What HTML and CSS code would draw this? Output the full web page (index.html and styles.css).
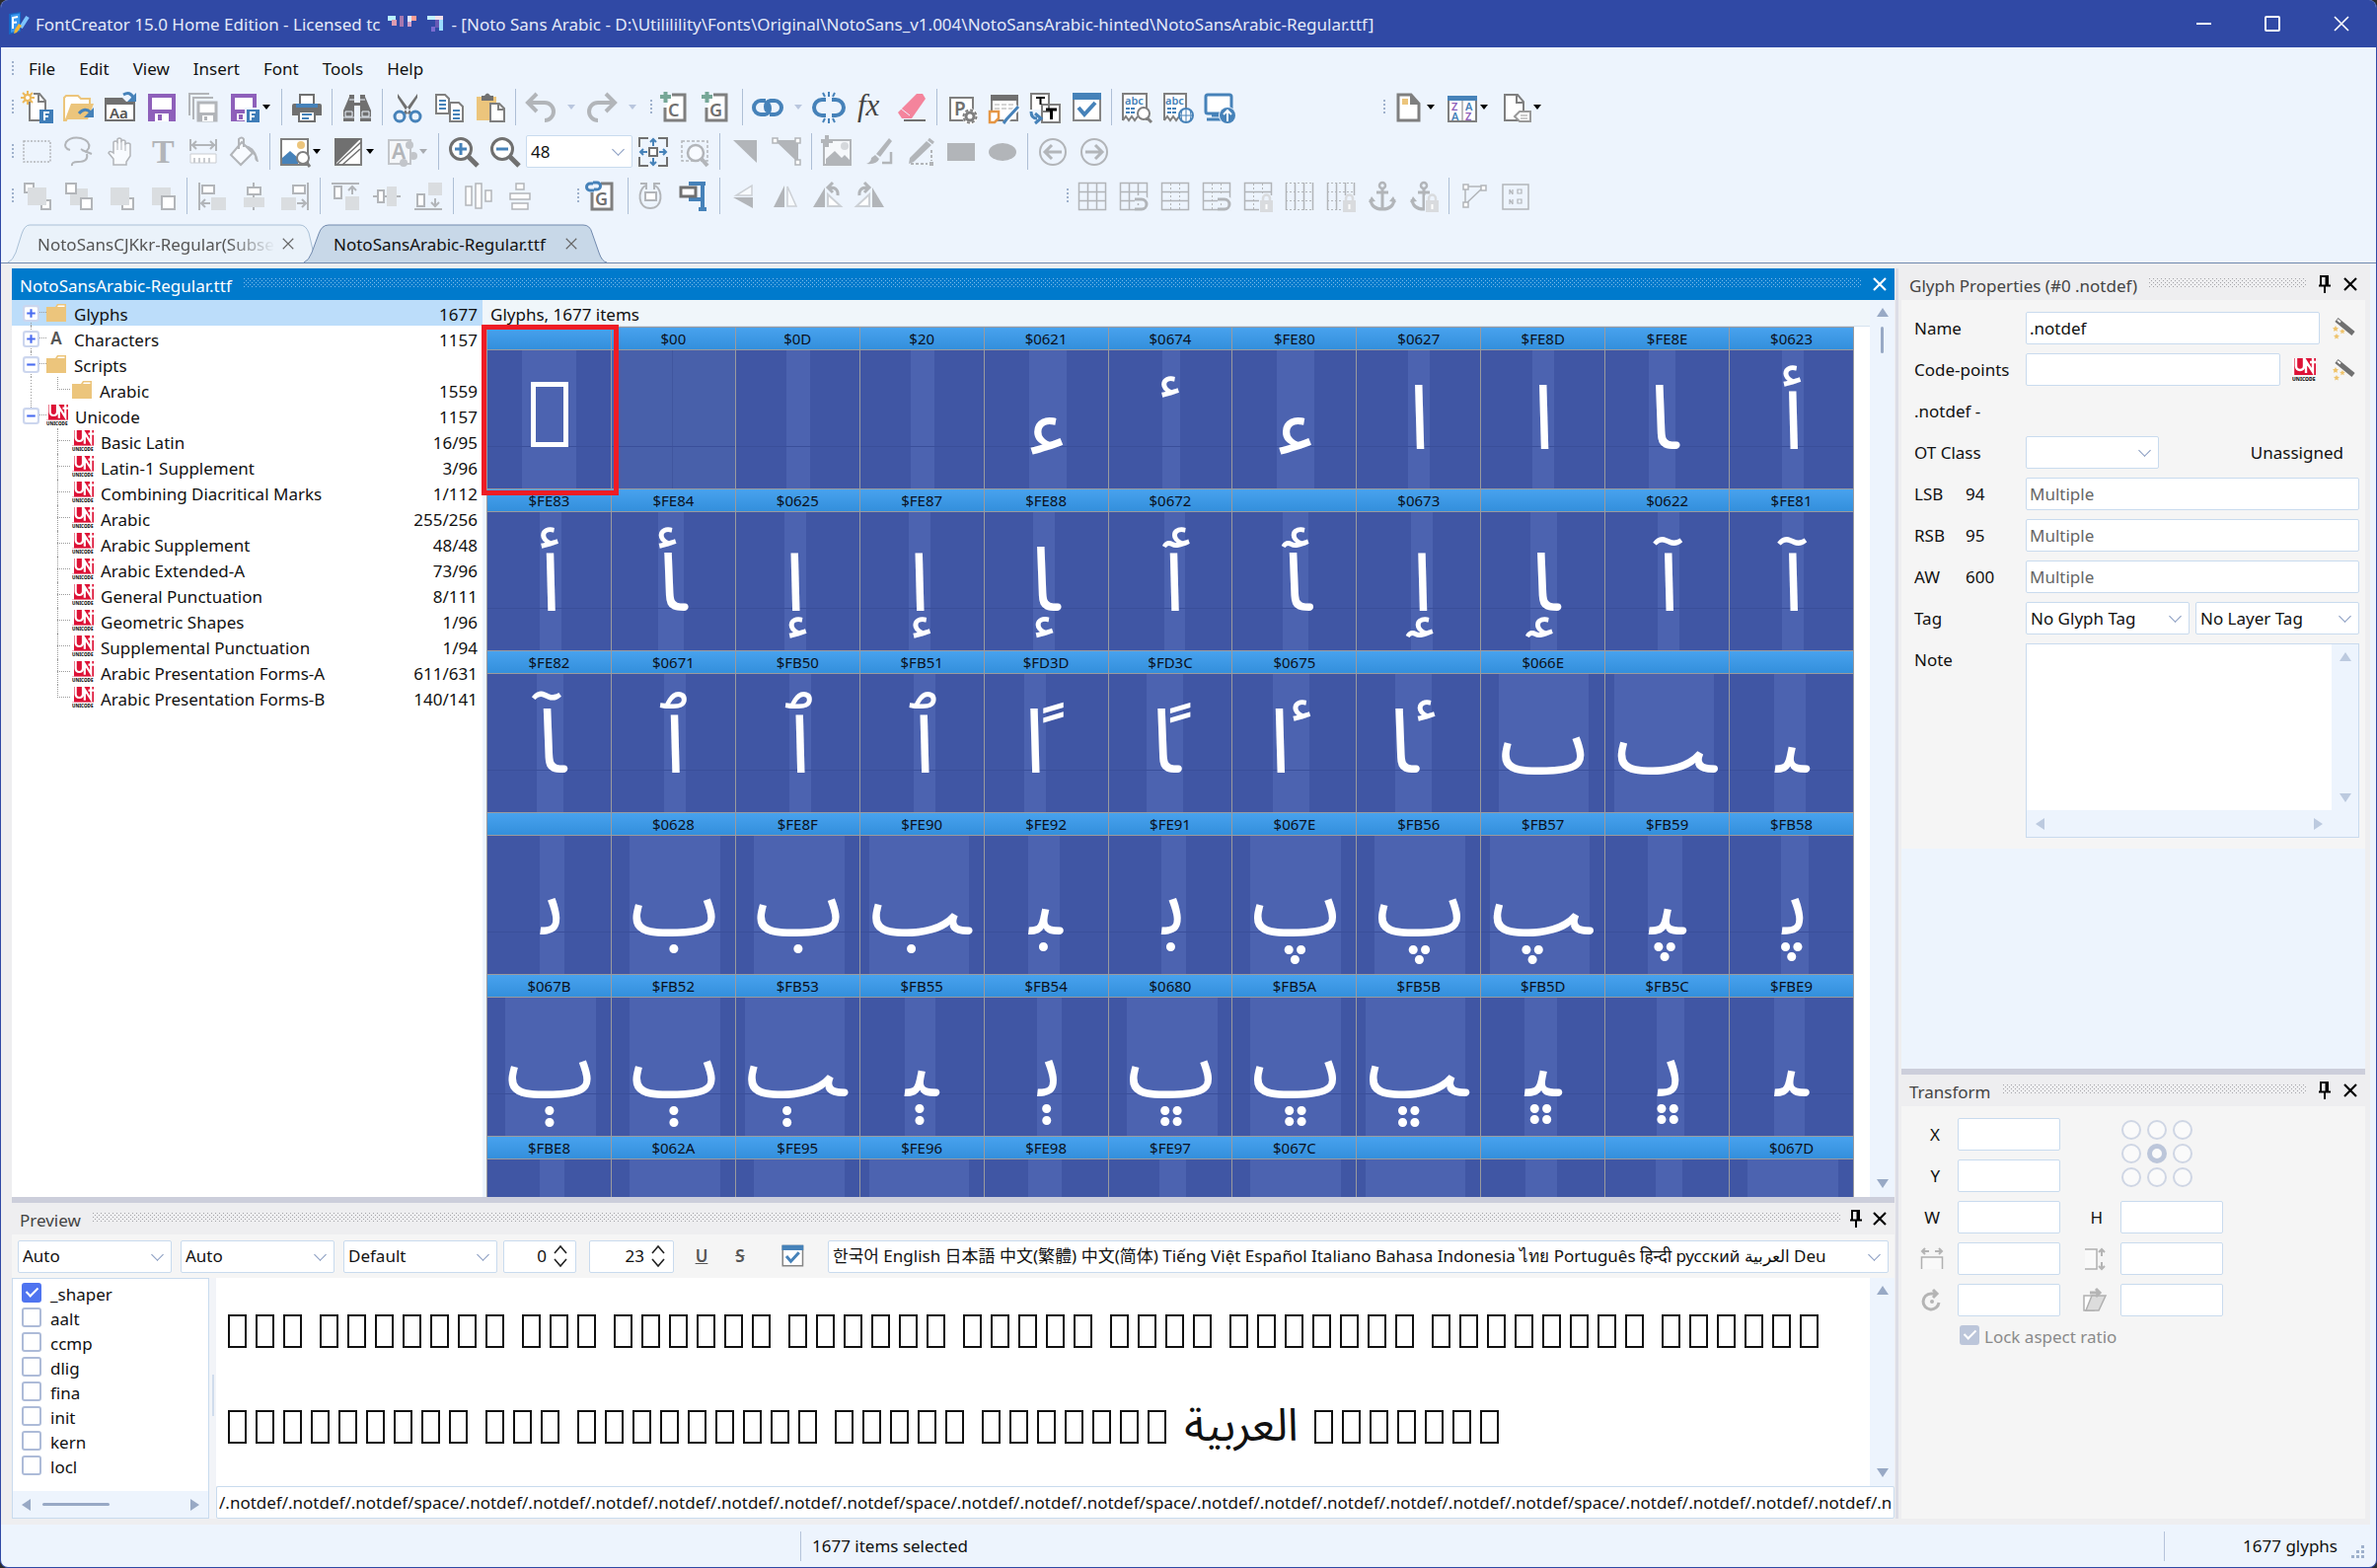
FILE: index.html
```html
<!DOCTYPE html>
<html lang="en">
<head>
<meta charset="utf-8">
<title>FontCreator 15.0 Home Edition</title>
<link rel="stylesheet" href="styles.css">
</head>
<body>
<svg class="defs" aria-hidden="true">
  <defs>
    <symbol id="unicode" viewBox="0 0 24 24">
      <rect width="24" height="17" fill="#dd1236"/>
      <path d="M4 0v8q0 4 4 4t4-4V0M14 15V3l7 11V0M18 4h6M1 0v17" fill="none" stroke="#fff" stroke-width="2.4"/>
      <text x="0" y="23" font-size="5" font-weight="800" fill="#111">UNICODE</text>
    </symbol>
    <symbol id="folder" viewBox="0 0 20 18"><path d="M0 3h9l2-3h9v18H0z" fill="#ecc57c"/><path d="M12 1.500h6.500V3H11z" fill="#fff"/></symbol>
    <symbol id="plus" viewBox="0 0 16 16"><rect x="1" y="1" width="14" height="14" rx="2" fill="#fff" stroke="#ccd6ee" stroke-width="2"/><path d="M4 8h8M8 4v8" stroke="#4a6cf0" stroke-width="2"/></symbol>
    <symbol id="minus" viewBox="0 0 16 16"><rect x="1" y="1" width="14" height="14" rx="2" fill="#fff" stroke="#ccd6ee" stroke-width="2"/><path d="M4 8h8" stroke="#4a6cf0" stroke-width="2"/></symbol>
    <symbol id="close" viewBox="0 0 16 16"><path d="M2 2l12 12M14 2L2 14" fill="none" stroke="currentColor" stroke-width="2.200"/></symbol>
    <symbol id="thinclose" viewBox="0 0 16 16"><path d="M2 2l12 12M14 2L2 14" fill="none" stroke="currentColor" stroke-width="1.300"/></symbol>
    <symbol id="pin" viewBox="0 0 16 18"><path d="M4 10V1h7v9M9.500 1v9M2 10.500h12M8 11v7" fill="none" stroke="currentColor" stroke-width="2"/></symbol>
    <symbol id="up" viewBox="0 0 12 10"><path d="M6 0l6 9H0z" fill="currentColor"/></symbol>
    <symbol id="down" viewBox="0 0 12 10"><path d="M6 10l6-9H0z" fill="currentColor"/></symbol>
    <symbol id="left" viewBox="0 0 10 12"><path d="M0 6l9-6v12z" fill="currentColor"/></symbol>
    <symbol id="right" viewBox="0 0 10 12"><path d="M10 6L1 0v12z" fill="currentColor"/></symbol>
    <symbol id="wand" viewBox="0 0 24 24"><path d="M5 3l17 14" stroke="#707070" stroke-width="5"/><path d="M6 3l3 2.500" stroke="#fff" stroke-width="2"/><path d="M4 9l1 2 2 .3-1.500 1.500.4 2L4 14l-2 .8.400-2L1 11.300l2-.3zM11 12l.8 1.700 2 .3-1.500 1.300.4 2-1.700-1-1.700 1 .3-2L8 14l2-.3zM5 17l.9 1.800 2.100.2-1.600 1.500.4 2L5 21.500 3.200 22.500l.4-2L2 19l2.100-.2z" fill="#efc36b"/></symbol>
    <symbol id="ticked" viewBox="0 0 32 32"><path d="M3 2h27v27H3z" fill="#fff" stroke="#858585" stroke-width="2"/><path d="M2 1h29v7H2z" fill="#4682b9"/><path d="M8 16l6 7 11-12" fill="none" stroke="#4682b9" stroke-width="4"/></symbol>
    <symbol id="grid" viewBox="0 0 32 32"><path d="M2.500 2.500h27v27h-27zM11.500 2v28M20.500 2v28M2 11.500h28M2 20.500h28" fill="none" stroke="currentColor" stroke-width="1.500"/></symbol>
    <symbol id="gridrows" viewBox="0 0 32 32"><path d="M2.500 2.500h27v27h-27zM2 11.500h28M2 20.500h28" fill="none" stroke="currentColor" stroke-width="1.500"/><path d="M11.500 3v26M20.500 3v26" stroke="currentColor" stroke-dasharray="2 2"/></symbol>
    <symbol id="gridcols" viewBox="0 0 32 32"><path d="M2.500 2v28M29.500 2v28M11.500 2v28M20.500 2v28" stroke="currentColor" stroke-width="1.500"/><path d="M2 2.500h28M2 29.500h28M2 11.500h28M2 20.500h28" stroke="currentColor" stroke-dasharray="2 2"/></symbol>
    <symbol id="magnet" viewBox="0 0 32 32"><path d="M17 19h7a5 5 0 0 1 0 10h-7" fill="none" stroke="#edf4fd" stroke-width="8"/><path d="M17 19h7a5 5 0 0 1 0 10h-7" fill="none" stroke="currentColor" stroke-width="3"/></symbol>
    <symbol id="lock" viewBox="0 0 32 32"><path d="M17 15h15v17H17z" fill="#edf4fd"/><path d="M18 20h13v12H18z" fill="#d9dbde"/><path d="M21 21v-3a3.500 3.500 0 0 1 7 0v3" fill="none" stroke="#d9dbde" stroke-width="2.500"/><path d="M24.500 24v5" stroke="#fff" stroke-width="2"/></symbol>
    <symbol id="anchor" viewBox="0 0 32 32"><circle cx="16" cy="5" r="3" fill="none" stroke="currentColor" stroke-width="2.500"/><path d="M16 8v21M10 12h12M4 19q1 10 12 10t12-10" fill="none" stroke="currentColor" stroke-width="3"/><path d="M2 22l3-6 4 5zM30 22l-3-6-4 5z" fill="currentColor"/></symbol>
  </defs>
</svg>

<div class="window">
  <header class="titlebar">
    <svg class="logo" viewBox="0 0 22 24"><path d="M1 2l12-2v20L1 23z" fill="#1767c6"/><path d="M3 3l9-1.500V19L3 21z" fill="#3a97ee"/><path d="M5 17V6l5-1M5 11l4-.6" fill="none" stroke="#fff" stroke-width="2"/><path d="M20 5l-7 11" stroke="#7cc4ff" stroke-width="4"/><path d="M14 14l-5 7-3 1 1-4 4-6z" fill="#f2b632"/></svg>
    <h1>FontCreator 15.0 Home Edition - Licensed tc</h1>
    <svg class="mosaic" viewBox="0 0 58 16"><path d="M0 0h8v5H0z" fill="#b9f3ff"/><path d="M4 4h5v6H4z" fill="#dc9bb0"/><path d="M12 0h4v11h-4z" fill="#a778b0"/><path d="M20 0h4v6h-4z" fill="#dde9ff"/><path d="M24 0h5v5h-5z" fill="#ff9d94"/><path d="M20 6h4v5h-4z" fill="#cf9dc4"/><path d="M40 0h8v4h-8z" fill="#c2f1ff"/><path d="M48 0h8v4h-8z" fill="#f3dfe9"/><path d="M48 4h4v8h-4z" fill="#6658b4"/><path d="M52 4h4v11h-4z" fill="#9adcff"/><path d="M44 11h4v5h-4z" fill="#7a6bd0"/></svg>
    <h1>- [Noto Sans Arabic - D:\Utililility\Fonts\Original\NotoSans_v1.004\NotoSansArabic-hinted\NotoSansArabic-Regular.ttf]</h1>
    <div class="winbtns">
      <button aria-label="Minimize"><svg viewBox="0 0 16 16"><path d="M1 8h15" stroke="#fff" stroke-width="2"/></svg></button>
      <button aria-label="Maximize"><svg viewBox="0 0 16 16"><rect x="1" y="1" width="14" height="14" rx="1" fill="none" stroke="#fff" stroke-width="2"/></svg></button>
      <button aria-label="Close"><svg viewBox="0 0 16 16"><path d="M1 1l14 14M15 1L1 15" stroke="#fff" stroke-width="1.600"/></svg></button>
    </div>
  </header>

  <nav class="menu">
    <i class="grip"></i>
    <button>File</button><button>Edit</button><button>View</button><button>Insert</button><button>Font</button><button>Tools</button><button>Help</button>
  </nav>

  <div class="bar">
    <i class="grip"></i>
    <button class="tb" aria-label="New"><svg viewBox="0 0 32 32"><path d="M8 10v19h16V9l-6-7H12" fill="#fff" stroke="#7f7f7f" stroke-width="2"/><path d="M17 2v8h7" fill="none" stroke="#7f7f7f" stroke-width="2"/><circle cx="6" cy="6" r="3" fill="#fff" stroke="#ecb95c" stroke-width="2"/><path d="M6-1v4M6 9v4M-1 6h4M9 6h4M1 1l3 3M8 8l3 3M11 1L8 4M4 8l-3 3" stroke="#ecb95c" stroke-width="2"/><path d="M18 18h14v14H18z" fill="#3f7db8"/><path d="M23 29v-8h5M23 25h4" fill="none" stroke="#fff" stroke-width="2"/></svg></button>
    <button class="tb" aria-label="Open"><svg viewBox="0 0 32 32"><path d="M1 6l2-2h12l3 3h9v7H10L3 29H1z" fill="#fff" stroke="#ecc57c" stroke-width="2"/><path d="M8 12h23l-6 16H2z" fill="#ecc57c"/><path d="M16 22q6-7 12-1" fill="none" stroke="#4682b9" stroke-width="3"/><path d="M31 16v10h-10z" fill="#4682b9"/></svg></button>
    <button class="tb" aria-label="Open installed font"><svg viewBox="0 0 32 32"><path d="M1 12h29v17H1z" fill="#fff" stroke="#707070" stroke-width="2"/><path d="M0 6h18l4 4h9v3H0z" fill="#707070"/><text x="5" y="27" font-size="15" font-weight="600" fill="#555">Aa</text><path d="M19 3q7-4 10 3" fill="none" stroke="#4682b9" stroke-width="3"/><path d="M32 1v9h-9z" fill="#4682b9"/></svg></button>
    <button class="tb" aria-label="Save"><svg viewBox="0 0 32 32"><path d="M4 4h24v24H4z" fill="#fff" stroke="#8e60ba" stroke-width="4"/><path d="M2 18h28v12H2z" fill="#8e60ba"/><path d="M9 22h14v8H9z" fill="#fff"/><path d="M12 23h4v6h-4z" fill="#8e60ba"/></svg></button>
    <button class="tb off" aria-label="Save all"><svg viewBox="0 0 32 32"><path d="M2 24V2h20M6 28V6h20" fill="none" stroke="currentColor" stroke-width="2"/><path d="M11 11h18v18H11z" fill="#fff" stroke="currentColor" stroke-width="3"/><path d="M11 21h19v9H11z" fill="currentColor"/><path d="M15 24h11v6H15z" fill="#fff"/><path d="M17 25h3v4h-3z" fill="currentColor"/></svg></button>
    <button class="tb" aria-label="Save as"><svg viewBox="0 0 32 32"><path d="M4 4h22v24H4z" fill="#fff" stroke="#8e60ba" stroke-width="4"/><path d="M2 18h14v12H2z" fill="#8e60ba"/><path d="M8 22h8v7H8z" fill="#fff"/><path d="M10 23h4v5h-4z" fill="#8e60ba"/><path d="M16 16h16v16H16z" fill="#edf4fd"/><path d="M18 18h13v13H18z" fill="#3f7db8"/><path d="M22 29v-8h5M22 25h4" fill="none" stroke="#fff" stroke-width="2"/></svg></button>
    <button class="dd" aria-label="Save options"></button>
    <i class="sep"></i>
    <button class="tb" aria-label="Print"><svg viewBox="0 0 32 32"><path d="M1 14q0-2 2-2h26q2 0 2 2v10H1z" fill="#707070"/><path d="M9 3h14v11H9z" fill="#fff" stroke="#707070" stroke-width="2"/><path d="M5 12h22v4H5z" fill="#4682b9"/><path d="M8 20h16v10H8z" fill="#fff" stroke="#707070" stroke-width="2"/><path d="M11 23h10M11 27h7" stroke="#4682b9" stroke-width="2"/></svg></button>
    <i class="sep"></i>
    <button class="tb" aria-label="Find"><svg viewBox="0 0 32 32"><path d="M2 30V19L8 5V3h5v8h6V3h5v2l6 14v11H19V14h-6v16z" fill="#707070"/><path d="M4 20h7v5H4zM21 20h7v5h-7z" fill="none" stroke="#edf4fd"/><path d="M2 26h11M19 26h11M8 8h5M19 8h5" stroke="#edf4fd"/></svg></button>
    <i class="sep"></i>
    <button class="tb" aria-label="Cut"><svg viewBox="0 0 32 32"><path d="M6 2l14 19-3 2L6 6zM26 2L12 21l3 2L26 6z" fill="#707070"/><circle cx="8" cy="25" r="5" fill="none" stroke="#4682b9" stroke-width="3"/><circle cx="24" cy="25" r="5" fill="none" stroke="#4682b9" stroke-width="3"/></svg></button>
    <button class="tb" aria-label="Copy"><svg viewBox="0 0 32 32"><path d="M3 3h9l4 4v15H3zM17 11h9l4 4v15H17z" fill="#fff" stroke="#7f7f7f" stroke-width="2"/><path d="M6 9h7M6 13h7M6 17h7M20 19h7M20 23h7M20 27h7" stroke="#4682b9" stroke-width="2"/></svg></button>
    <button class="tb" aria-label="Paste"><svg viewBox="0 0 32 32"><path d="M2 5h20v24H2z" fill="#ecc57c"/><path d="M7 4h3q3-5 6 0h3v5H7z" fill="#707070"/><path d="M16 12h9l5 5v13H16z" fill="#fff" stroke="#7f7f7f" stroke-width="2"/><path d="M24 12v6h6" fill="none" stroke="#7f7f7f" stroke-width="2"/></svg></button>
    <i class="sep"></i>
    <button class="tb off" aria-label="Undo"><svg viewBox="0 0 32 32"><path d="M3 11h17a9 9 0 0 1 0 18M12 2l-9 9 9 9" fill="none" stroke="currentColor" stroke-width="4"/></svg></button>
    <button class="dd wide" aria-label="Undo list"></button>
    <button class="tb off" aria-label="Redo"><svg viewBox="0 0 32 32"><path d="M29 11H12a9 9 0 0 0 0 18M20 2l9 9-9 9" fill="none" stroke="currentColor" stroke-width="4"/></svg></button>
    <button class="dd wide" aria-label="Redo list"></button>
    <i class="grip mid"></i>
    <button class="tb" aria-label="Add characters"><svg viewBox="0 0 32 32"><path d="M12 3h13v26H5V16" fill="#fff" stroke="#7f7f7f" stroke-width="3"/><path d="M0 5h11M5.500 0v11" stroke="#76a797" stroke-width="4"/><text x="8" y="25" font-size="18" font-weight="600" fill="#707070">C</text></svg></button>
    <button class="tb" aria-label="Add glyphs"><svg viewBox="0 0 32 32"><path d="M12 3h13v26H5V16" fill="#fff" stroke="#7f7f7f" stroke-width="3"/><path d="M0 5h11M5.500 0v11" stroke="#76a797" stroke-width="4"/><text x="8" y="25" font-size="18" font-weight="600" fill="#707070">G</text></svg></button>
    <i class="sep"></i>
    <button class="tb" aria-label="Link"><svg viewBox="0 0 32 32"><path d="M14 9H9a7 7 0 0 0 0 14h4q5-1 5-6t-4-5M18 23h5a7 7 0 0 0 0-14h-4q-5 1-5 6t4 5" fill="none" stroke="#4682b9" stroke-width="4"/></svg></button>
    <button class="dd wide" aria-label="Link options"></button>
    <button class="tb" aria-label="Unlink"><svg viewBox="0 0 32 32"><path d="M13 8H9a8 8 0 0 0 0 16h4M19 8h4a8 8 0 0 1 0 16h-4" fill="none" stroke="#4682b9" stroke-width="4"/><path d="M16 0v5M10 1l2 4M22 1l-2 4M16 27v5M10 31l2-4M22 31l-2-4" stroke="#4682b9" stroke-width="2"/></svg></button>
    <button class="tb" aria-label="Formula"><svg viewBox="0 0 32 32"><text x="3" y="24" font-size="31" font-style="italic" class="serif" fill="#444">fx</text></svg></button>
    <button class="tb" aria-label="Clear"><svg viewBox="0 0 32 32"><path d="M21 2h6l3 5-14 20H6l-4-6z" fill="#f4849c"/><path d="M5 17l9 7" stroke="#edf4fd"/><path d="M8 29h22" stroke="#707070" stroke-width="2"/></svg></button>
    <i class="sep"></i>
    <button class="tb" aria-label="Properties"><svg viewBox="0 0 32 32"><path d="M4 6h23v23H4z" fill="#fff" stroke="#7f7f7f" stroke-width="2"/><text x="8" y="24" font-size="19" font-weight="600" fill="#707070">P</text><circle cx="24" cy="25" r="8" fill="#fff"/><circle cx="24" cy="25" r="4" fill="none" stroke="#7f7f7f" stroke-width="3"/><circle cx="24" cy="25" r="6.500" fill="none" stroke="#7f7f7f" stroke-width="2" stroke-dasharray="3 2"/></svg></button>
    <button class="tb" aria-label="Kerning"><svg viewBox="0 0 32 32"><path d="M4 4h26v25H4z" fill="#fff" stroke="#7f7f7f" stroke-width="2"/><path d="M3 3h28v6H3z" fill="#707070"/><path d="M7 13h20M7 17h20" stroke="#aaa" stroke-dasharray="5 2"/><path d="M2 31V20h9v7l-4 4z" fill="#fff" stroke="#e59645" stroke-width="2.500"/><path d="M31 15L18 30" stroke="#fff" stroke-width="6"/><path d="M31 15L19 28l-3 4" stroke="#4682b9" stroke-width="3"/></svg></button>
    <button class="tb" aria-label="Transform text"><svg viewBox="0 0 32 32"><path d="M2 2h18v18H2zM13 13h18v18H13z" fill="#fff" stroke="#7f7f7f" stroke-width="2"/><path d="M7 6h9M11.500 6v7" stroke="#000" stroke-width="2"/><path d="M17 18h11M22.500 18v10" stroke="#000" stroke-width="3"/><path d="M0 18h12v14H0z" fill="#edf4fd"/><path d="M2 20q0 7 6 7M6 22l6 5-6 5" fill="none" stroke="#4682b9" stroke-width="3"/></svg></button>
    <button class="tb" aria-label="Validate"><svg><use href="#ticked"/></svg></button>
    <i class="sep"></i>
    <button class="tb" aria-label="Preview text"><svg viewBox="0 0 32 32"><path d="M2 29V2h24v27M2 29l3-4 3 4 3-4 3 4 3-4" fill="#fff" stroke="#7f7f7f" stroke-width="2"/><text x="4" y="13" font-size="11" font-weight="600" fill="#4682b9">abc</text><path d="M5 17h9M5 21h9" stroke="#4682b9" stroke-width="2" stroke-dasharray="4 1"/><circle cx="23" cy="22" r="6" fill="#fff" stroke="#7f7f7f" stroke-width="2"/><path d="M27 27l4 4" stroke="#7f7f7f" stroke-width="3"/></svg></button>
    <button class="tb" aria-label="Web preview"><svg viewBox="0 0 32 32"><path d="M2 29V2h22v27M2 29l3-4 3 4 3-4 3 4 3-4" fill="#fff" stroke="#7f7f7f" stroke-width="2"/><text x="3" y="13" font-size="11" font-weight="600" fill="#4682b9">abc</text><path d="M5 17h9M5 21h9" stroke="#4682b9" stroke-width="2" stroke-dasharray="4 1"/><circle cx="24" cy="24" r="7" fill="#fff" stroke="#4682b9" stroke-width="2"/><path d="M17 24h14M24 17v14M20 18q-2 6 0 12M28 18q2 6 0 12" fill="none" stroke="#4682b9"/></svg></button>
    <button class="tb" aria-label="Install"><svg viewBox="0 0 32 32"><rect x="2" y="3" width="26" height="19" rx="2" fill="#fff" stroke="#4682b9" stroke-width="3"/><path d="M3 28h15M8 24h8" stroke="#4682b9" stroke-width="3"/><circle cx="24" cy="24" r="9" fill="#edf4fd"/><circle cx="24" cy="24" r="8" fill="#4682b9"/><path d="M24 30V20M20 23l4-4 4 4" fill="none" stroke="#fff" stroke-width="2"/></svg></button>
    <i class="grip far1"></i>
    <button class="tb" aria-label="Page"><svg viewBox="0 0 32 32"><path d="M5 3h13l8 9v17H5z" fill="#fff" stroke="#7f7f7f" stroke-width="3"/><path d="M17 3v10h9z" fill="#7f7f7f"/><path d="M9 7h6v6H9z" fill="#ecc57c"/></svg></button><button class="dd" aria-label="Page options"></button>
    <button class="tb" aria-label="Sort"><svg viewBox="0 0 32 32"><path d="M2 5h28v25H2z" fill="#fff" stroke="#7f7f7f" stroke-width="2"/><path d="M1 4h30v5H1z" fill="#4682b9"/><path d="M16 9v20" stroke="#7f7f7f"/><text x="5" y="19" font-size="11" font-weight="600" fill="#8e60ba">Z</text><text x="5" y="29" font-size="11" font-weight="600" fill="#4682b9">A</text><text x="19" y="19" font-size="11" font-weight="600" fill="#4682b9">A</text><text x="19" y="29" font-size="11" font-weight="600" fill="#8e60ba">Z</text></svg></button><button class="dd" aria-label="Sort options"></button>
    <button class="tb" aria-label="Tag page"><svg viewBox="0 0 32 32"><path d="M5 3h13l6 7v19H5z" fill="#fff" stroke="#7f7f7f" stroke-width="2"/><path d="M17 3v8h7" fill="none" stroke="#7f7f7f" stroke-width="2"/><path d="M15 25l5-5h11v10H20z" fill="#fff" stroke="#999" stroke-width="2"/><path d="M21 24h7M21 27h7" stroke="#999"/></svg></button><button class="dd" aria-label="Tag options"></button>
  </div>

  <div class="bar">
    <i class="grip"></i>
    <button class="tb off" aria-label="Select"><svg viewBox="0 0 32 32"><path d="M2 5h27v21H2z" fill="none" stroke="currentColor" stroke-width="1.500" stroke-dasharray="2 1.500"/></svg></button>
    <button class="tb off" aria-label="Lasso"><svg viewBox="0 0 32 32"><path d="M7 14Q0 12 3 6q5-6 15-4 10 3 8 10l-3 4-5-3M19 14l10 4M24 18q2 8-9 8-7 0-6 4" fill="none" stroke="currentColor" stroke-width="2"/></svg></button>
    <button class="tb off" aria-label="Hand"><svg viewBox="0 0 32 32"><path d="M9 29V23L4 17q1-3 5 0V6q2-2 4 0V3q2-2 4 0v2q2-2 4 0v3q3-2 5 0v12l-4 6v3z" fill="#f8fbff" stroke="currentColor" stroke-width="1.500"/><path d="M13 6v8M17 4v10M21 6v9" stroke="currentColor"/></svg></button>
    <button class="tb off" aria-label="Text"><svg viewBox="0 0 32 32"><text x="6" y="27" font-size="34" font-weight="700" class="serif" fill="currentColor">T</text></svg></button>
    <button class="tb off" aria-label="Measure"><svg viewBox="0 0 32 32"><path d="M3 3v12M29 3v12M4 9h24M9 5L5 9l4 4M23 5l4 4-4 4" fill="none" stroke="currentColor" stroke-width="2"/><path d="M3 18h26v9H3z" fill="#fff" stroke="#c9ccd1"/><path d="M7 22v5M12 22v5M17 22v5M22 22v5" stroke="#c9ccd1" stroke-width="2"/></svg></button>
    <button class="tb off" aria-label="Fill"><svg viewBox="0 0 32 32"><path d="M13 6l11 11-12 12L2 19zM10 13V3q3-3 5 0v8" fill="#f8fbff" stroke="currentColor" stroke-width="2"/><path d="M16 9q11 1 14 17-4 0-4-6z" fill="currentColor"/></svg></button>
    <i class="sep"></i>
    <button class="tb" aria-label="Image"><svg viewBox="0 0 32 32"><path d="M2 3h27v26H2z" fill="#fff" stroke="#7f7f7f" stroke-width="2"/><circle cx="22" cy="9" r="4" fill="#ecc57c"/><path d="M3 28v-6l8-7 8 7v6z" fill="#4682b9"/><circle cx="24" cy="22" r="6" fill="#fff" stroke="#7f7f7f" stroke-width="2"/><path d="M28 27l3 4" stroke="#7f7f7f" stroke-width="3"/></svg></button><button class="dd" aria-label="Image options"></button>
    <button class="tb" aria-label="Shade"><svg viewBox="0 0 32 32"><path d="M3 3h26v26H3z" fill="#fff" stroke="#7f7f7f" stroke-width="2"/><path d="M2 2h27L2 29z" fill="#707070"/><path d="M4 29L29 6M10 29l18-16" stroke="#707070" stroke-width="1.500"/></svg></button><button class="dd" aria-label="Shade options"></button>
    <button class="tb off" aria-label="Character colour"><svg viewBox="0 0 32 32"><path d="M3 4h22v24H3z" fill="#f5f7fa" stroke="#c2c5ca" stroke-width="2"/><text x="6" y="23" font-size="21" font-weight="600" fill="currentColor">A</text><circle cx="24" cy="9" r="4" fill="#c2c5ca"/><circle cx="28" cy="20" r="4" fill="#c2c5ca"/><circle cx="18" cy="27" r="4" fill="#c2c5ca"/></svg></button><button class="dd grey" aria-label="Colour options"></button>
    <i class="sep"></i>
    <button class="tb" aria-label="Zoom in"><svg viewBox="0 0 32 32"><circle cx="13" cy="13" r="10.500" fill="#fff" stroke="#707070" stroke-width="3"/><path d="M21 21l9 9" stroke="#707070" stroke-width="5"/><path d="M7 13h12M13 7v12" stroke="#4682b9" stroke-width="3"/></svg></button>
    <button class="tb" aria-label="Zoom out"><svg viewBox="0 0 32 32"><circle cx="13" cy="13" r="10.500" fill="#fff" stroke="#707070" stroke-width="3"/><path d="M21 21l9 9" stroke="#707070" stroke-width="5"/><path d="M7 13h12" stroke="#4682b9" stroke-width="3"/></svg></button>
    <span class="combo zoom"><select aria-label="Zoom"><option>48</option></select></span>
    <button class="tb" aria-label="Fit"><svg viewBox="0 0 32 32"><path d="M11 2H2v9M21 2h9v9M2 21v9h9M30 21v9h-9" fill="none" stroke="#707070" stroke-width="2"/><path d="M12 12h8v8h-8z" fill="#fff" stroke="#707070" stroke-width="2"/><path d="M16 3v7M16 22v7M3 16h7M22 16h7M13 6l3-3 3 3M13 26l3 3 3-3M6 13l-3 3 3 3M26 13l3 3-3 3" fill="none" stroke="#4682b9" stroke-width="2"/></svg></button>
    <button class="tb off" aria-label="Zoom selection"><svg viewBox="0 0 32 32"><path d="M3 5h26v20H3z" fill="none" stroke="currentColor" stroke-width="1.500" stroke-dasharray="3 2"/><circle cx="17" cy="17" r="8" fill="#f8fbff" stroke="currentColor" stroke-width="2.500"/><path d="M23 23l6 7" stroke="currentColor" stroke-width="4"/></svg></button>
    <i class="sep"></i>
    <button class="tb off" aria-label="Contour"><svg viewBox="0 0 32 32"><path d="M4 4h24v23z" fill="currentColor"/></svg></button>
    <button class="tb off" aria-label="Point"><svg viewBox="0 0 32 32"><path d="M4 4h24v23z" fill="currentColor"/><path d="M2 2h5v5H2zM25 2h5v5h-5zM25 24h5v5h-5z" fill="#fff" stroke="currentColor" stroke-width="1.500"/></svg></button>
    <i class="sep"></i>
    <button class="tb off" aria-label="Add image"><svg viewBox="0 0 32 32"><path d="M3 4h27v25H3z" fill="#f6f8fb" stroke="currentColor" stroke-width="2"/><path d="M5 28v-5l9-8 7 7 3-3 6 6v3z" fill="currentColor"/><circle cx="24" cy="10" r="4" fill="#d5d8dc"/><path d="M0 5h12M6-1v12" stroke="currentColor" stroke-width="4"/></svg></button>
    <button class="tb off" aria-label="Brush"><svg viewBox="0 0 32 32"><path d="M27 2l3 3-12 16-4-3z" fill="currentColor"/><path d="M13 19l4 4q-2 6-13 5 5-2 5-6z" fill="currentColor"/><path d="M20 27h9V16" fill="none" stroke="currentColor" stroke-width="2.500"/></svg></button>
    <button class="tb off" aria-label="Pencil"><svg viewBox="0 0 32 32"><path d="M23 5l5 4L10 26l-5 2 1-6z" fill="currentColor"/><path d="M25 3l5 4" stroke="currentColor" stroke-width="3"/><path d="M7 28h17M28 14v11" stroke="currentColor" stroke-width="2" stroke-dasharray="3 2"/><path d="M26 26h4v4h-4z" fill="currentColor"/></svg></button>
    <button class="tb off" aria-label="Rectangle"><svg viewBox="0 0 32 32"><path d="M2 7h28v18H2z" fill="currentColor"/></svg></button>
    <button class="tb off" aria-label="Ellipse"><svg viewBox="0 0 32 32"><ellipse cx="16" cy="16" rx="14" ry="9" fill="currentColor"/></svg></button>
    <i class="sep"></i>
    <button class="tb off" aria-label="Back"><svg viewBox="0 0 32 32"><circle cx="16" cy="16" r="13" fill="none" stroke="currentColor" stroke-width="2"/><path d="M25 16H9M15 9l-7 7 7 7" fill="none" stroke="currentColor" stroke-width="3"/></svg></button>
    <button class="tb off" aria-label="Forward"><svg viewBox="0 0 32 32"><circle cx="16" cy="16" r="13" fill="none" stroke="currentColor" stroke-width="2"/><path d="M7 16h16M17 9l7 7-7 7" fill="none" stroke="currentColor" stroke-width="3"/></svg></button>
  </div>

  <div class="bar">
    <i class="grip"></i>
    <button class="tb off" aria-label="To front"><svg viewBox="0 0 32 32"><path d="M3 3h9v9H3zM20 20h9v9h-9z" fill="#fff" stroke="currentColor" stroke-width="2"/><path d="M6 7h19v18H6z" fill="#dadde0"/></svg></button>
    <button class="tb off" aria-label="Forward one"><svg viewBox="0 0 32 32"><path d="M7 8h18v17H7z" fill="#dadde0"/><path d="M3 3h10v10H3zM18 18h11v11H18z" fill="#fff" stroke="currentColor" stroke-width="2"/></svg></button>
    <button class="tb off" aria-label="Backward one"><svg viewBox="0 0 32 32"><path d="M18 18h11v11H18z" fill="#fff" stroke="currentColor" stroke-width="2"/><path d="M6 7h19v18H6z" fill="#dadde0"/></svg></button>
    <button class="tb off" aria-label="To back"><svg viewBox="0 0 32 32"><path d="M6 7h19v18H6z" fill="#dadde0"/><path d="M16 16h13v13H16z" fill="#fff" stroke="currentColor" stroke-width="2"/></svg></button>
    <i class="sep"></i>
    <button class="tb off" aria-label="Align left"><svg viewBox="0 0 32 32"><path d="M3 2v28" stroke="currentColor" stroke-width="2"/><path d="M6 5h12v8H6z" fill="#fff" stroke="currentColor" stroke-width="2"/><path d="M15 17h15v13H15z" fill="#dadde0"/><path d="M14 23H6M9 19l-4 4 4 4" fill="none" stroke="currentColor" stroke-width="2"/></svg></button>
    <button class="tb off" aria-label="Align centre"><svg viewBox="0 0 32 32"><path d="M16 2v28" stroke="currentColor" stroke-width="2"/><path d="M10 7h13v7H10z" fill="#fff" stroke="currentColor" stroke-width="2"/><path d="M6 17h21v10H6z" fill="#dadde0"/></svg></button>
    <button class="tb off" aria-label="Align right"><svg viewBox="0 0 32 32"><path d="M29 2v28" stroke="currentColor" stroke-width="2"/><path d="M14 5h12v8H14z" fill="#fff" stroke="currentColor" stroke-width="2"/><path d="M2 17h15v13H2z" fill="#dadde0"/><path d="M18 23h8M23 19l4 4-4 4" fill="none" stroke="currentColor" stroke-width="2"/></svg></button>
    <i class="sep"></i>
    <button class="tb off" aria-label="Align top"><svg viewBox="0 0 32 32"><path d="M2 3h28" stroke="currentColor" stroke-width="2"/><path d="M5 6h7v12H5z" fill="#fff" stroke="currentColor" stroke-width="2"/><path d="M16 16h14v14H16z" fill="#dadde0"/><path d="M23 14V7M19 10l4-4 4 4" fill="none" stroke="currentColor" stroke-width="2"/></svg></button>
    <button class="tb off" aria-label="Align middle"><svg viewBox="0 0 32 32"><path d="M2 16h28" stroke="currentColor" stroke-width="2"/><path d="M7 10h6v12H7z" fill="#fff" stroke="currentColor" stroke-width="2"/><path d="M16 6h10v20H16z" fill="#dadde0"/></svg></button>
    <button class="tb off" aria-label="Align bottom"><svg viewBox="0 0 32 32"><path d="M2 29h28" stroke="currentColor" stroke-width="2"/><path d="M5 14h7v12H5z" fill="#fff" stroke="currentColor" stroke-width="2"/><path d="M16 2h14v13H16z" fill="#dadde0"/><path d="M23 18v7M19 22l4 4 4-4" fill="none" stroke="currentColor" stroke-width="2"/></svg></button>
    <i class="sep"></i>
    <button class="tb off" aria-label="Distribute across"><svg viewBox="0 0 32 32"><path d="M3 6h6v19H3zM13 3h6v25h-6zM23 10h6v11h-6z" fill="#fff" stroke="currentColor" stroke-width="1.500"/></svg></button>
    <button class="tb off" aria-label="Distribute down"><svg viewBox="0 0 32 32"><path d="M12 3h8v6h-8zM6 13h20v6H6zM8 23h16v6H8z" fill="#fff" stroke="currentColor" stroke-width="1.500"/></svg></button>
    <i class="grip g3a"></i>
    <button class="tb" aria-label="Composite"><svg viewBox="0 0 32 32"><path d="M14 3h11v26H5V12" fill="#fff" stroke="#7f7f7f" stroke-width="3"/><text x="8" y="25" font-size="18" font-weight="600" fill="#707070">G</text><path d="M6 3H3a3.500 3.500 0 0 0 0 7h4M7 9h3a3.500 3.500 0 0 0 0-7H6" fill="none" stroke="#4682b9" stroke-width="3"/></svg></button>
    <i class="sep"></i>
    <button class="tb off" aria-label="Rotate"><svg viewBox="0 0 32 32"><path d="M8 5C0 10 0 28 13 28S26 10 18 5M3 3h6v6M23 3h-6v6" fill="none" stroke="currentColor" stroke-width="2"/><path d="M8 12h11v8H8z" fill="#fff" stroke="currentColor" stroke-width="2"/></svg></button>
    <button class="tb" aria-label="Complete"><svg viewBox="0 0 32 32"><path d="M10 3h17M24 3v26M10 19h14M20 29h8" stroke="#4682b9" stroke-width="4"/><path d="M2 7h15v9H2z" fill="#fff" stroke="#707070" stroke-width="3"/></svg></button>
    <i class="sep"></i>
    <button class="tb off" aria-label="Flip vertical"><svg viewBox="0 0 32 32"><path d="M23 5v10H7z" fill="#f8fbff" stroke="#ccd0d5" stroke-width="1.500"/><path d="M24 17v11L4 17z" fill="currentColor"/></svg></button>
    <button class="tb off" aria-label="Flip horizontal"><svg viewBox="0 0 32 32"><path d="M17 6v20h9z" fill="#f8fbff" stroke="#ccd0d5" stroke-width="1.500"/><path d="M14 5v22H3z" fill="currentColor"/></svg></button>
    <button class="tb off" aria-label="Rotate left"><svg viewBox="0 0 32 32"><path d="M13 7v20H1z" fill="currentColor"/><path d="M16 14v12h13z" fill="#fff" stroke="#ccd0d5" stroke-width="2"/><path d="M26 15q1-8-8-8M21 2l-5 5 5 5" fill="none" stroke="currentColor" stroke-width="3"/></svg></button>
    <button class="tb off" aria-label="Rotate right"><svg viewBox="0 0 32 32"><path d="M19 7v20h12z" fill="currentColor"/><path d="M16 14v12H3z" fill="#fff" stroke="#ccd0d5" stroke-width="2"/><path d="M6 15q-1-8 8-8M11 2l5 5-5 5" fill="none" stroke="currentColor" stroke-width="3"/></svg></button>
    <i class="grip g3b"></i>
    <button class="tb off" aria-label="Grid"><svg><use href="#grid"/></svg></button>
    <button class="tb off" aria-label="Snap to grid"><svg><use href="#grid"/><use href="#magnet"/></svg></button>
    <button class="tb off" aria-label="Metrics"><svg><use href="#gridrows"/></svg></button>
    <button class="tb off" aria-label="Snap to metrics"><svg><use href="#gridrows"/><use href="#magnet"/></svg></button>
    <button class="tb off" aria-label="Lock metrics"><svg><use href="#gridrows"/><use href="#lock"/></svg></button>
    <button class="tb off" aria-label="Guides"><svg><use href="#gridcols"/></svg></button>
    <button class="tb off" aria-label="Lock guides"><svg><use href="#gridcols"/><use href="#lock"/></svg></button>
    <button class="tb off" aria-label="Anchors"><svg><use href="#anchor"/></svg></button>
    <button class="tb off" aria-label="Lock anchors"><svg><use href="#anchor"/><use href="#lock"/></svg></button>
    <i class="sep"></i>
    <button class="tb off" aria-label="Nodes"><svg viewBox="0 0 32 32"><path d="M7 8v16l19-18H7" fill="none" stroke="currentColor" stroke-width="1.500"/><path d="M5 4h5v5H5zM23 5h5v5h-5zM5 22h5v5H5z" fill="#fff" stroke="currentColor" stroke-width="1.500"/></svg></button>
    <button class="tb off" aria-label="Point numbers"><svg viewBox="0 0 32 32"><path d="M3 4h26v25H3z" fill="none" stroke="currentColor" stroke-width="1.500"/><path d="M10 9v5M13 9v5M10 9l3 5M18 9h4v4h-4zM10 19v5M13 19v5M10 19l3 5M18 19h4v4h-4z" fill="none" stroke="currentColor" stroke-width="1.200"/></svg></button>
  </div>

  <div class="tabs" role="tablist">
    <button class="tab" role="tab"><svg class="tabshape" viewBox="0 0 312 40"><path d="M0 39Q5 37 8 29l6-19Q17 1 22 1h274q6 0 9 8l7 30" fill="#eaf2fa" stroke="#a9c0d6"/></svg><span class="tabtext fade">NotoSansCJKkr-Regular(Subse</span><svg class="tabx"><use href="#thinclose"/></svg></button>
    <button class="tab on" role="tab" aria-selected="true"><svg class="tabshape" viewBox="0 0 312 40"><path d="M0 39Q5 37 8 29l7-19Q18 1 25 1h258q7 0 9 8l7 20q3 9 8 10" fill="#c8d8e8" stroke="#7189ad"/></svg><span class="tabtext">NotoSansArabic-Regular.ttf</span><svg class="tabx"><use href="#thinclose"/></svg></button>
  </div>

  <main class="work">
    <div class="leftcol">
      <section class="overview">
        <div class="phead active"><h2>NotoSansArabic-Regular.ttf</h2><i class="dots"></i><button aria-label="Close panel"><svg class="x"><use href="#close"/></svg></button></div>
        <div class="ovbody">
          <ul class="tree">
            <li class="sel"><svg class="exp"><use href="#plus"/></svg><svg class="fold"><use href="#folder"/></svg><span>Glyphs</span><b>1677</b></li>
            <li><svg class="exp"><use href="#plus"/></svg><i class="aicon">A</i><span>Characters</span><b>1157</b></li>
            <li><svg class="exp"><use href="#minus"/></svg><svg class="fold"><use href="#folder"/></svg><span>Scripts</span></li>
            <li class="sub last thru"><svg class="fold"><use href="#folder"/></svg><span>Arabic</span><b>1559</b></li>
            <li class="end"><svg class="exp"><use href="#minus"/></svg><svg class="uni"><use href="#unicode"/></svg><span>Unicode</span><b>1157</b></li>
            <li class="sub"><svg class="uni"><use href="#unicode"/></svg><span>Basic Latin</span><b>16/95</b></li>
            <li class="sub"><svg class="uni"><use href="#unicode"/></svg><span>Latin-1 Supplement</span><b>3/96</b></li>
            <li class="sub"><svg class="uni"><use href="#unicode"/></svg><span>Combining Diacritical Marks</span><b>1/112</b></li>
            <li class="sub"><svg class="uni"><use href="#unicode"/></svg><span>Arabic</span><b>255/256</b></li>
            <li class="sub"><svg class="uni"><use href="#unicode"/></svg><span>Arabic Supplement</span><b>48/48</b></li>
            <li class="sub"><svg class="uni"><use href="#unicode"/></svg><span>Arabic Extended-A</span><b>73/96</b></li>
            <li class="sub"><svg class="uni"><use href="#unicode"/></svg><span>General Punctuation</span><b>8/111</b></li>
            <li class="sub"><svg class="uni"><use href="#unicode"/></svg><span>Geometric Shapes</span><b>1/96</b></li>
            <li class="sub"><svg class="uni"><use href="#unicode"/></svg><span>Supplemental Punctuation</span><b>1/94</b></li>
            <li class="sub"><svg class="uni"><use href="#unicode"/></svg><span>Arabic Presentation Forms-A</span><b>611/631</b></li>
            <li class="sub last"><svg class="uni"><use href="#unicode"/></svg><span>Arabic Presentation Forms-B</span><b>140/141</b></li>
          </ul>
          <div class="glyphpane">
            <p class="gtitle">Glyphs, 1677 items</p>
            <div class="gwrap"><div class="ggrid" id="ggrid"></div><i class="mark"></i></div>
          </div>
          <div class="vscroll"><svg class="av"><use href="#up"/></svg><i></i><svg class="av"><use href="#down"/></svg></div>
        </div>
      </section>

      <section class="preview">
        <div class="phead"><h2>Preview</h2><i class="dots"></i><button aria-label="Pin"><svg class="pin"><use href="#pin"/></svg></button><button aria-label="Close panel"><svg class="x"><use href="#close"/></svg></button></div>
        <div class="ptools">
          <span class="combo w156"><select aria-label="Script"><option>Auto</option></select></span>
          <span class="combo w156"><select aria-label="Direction"><option>Auto</option></select></span>
          <span class="combo w156"><select aria-label="Language"><option>Default</option></select></span>
          <span class="spin s1"><input value="0" aria-label="Spacing"><svg viewBox="0 0 14 22"><path d="M1 8l6-7 6 7M1 14l6 7 6-7" fill="none" stroke="#222" stroke-width="1.600"/></svg></span>
          <span class="spin s2"><input value="23" aria-label="Size"><svg viewBox="0 0 14 22"><path d="M1 8l6-7 6 7M1 14l6 7 6-7" fill="none" stroke="#222" stroke-width="1.600"/></svg></span>
          <button class="fmt"><u>U</u></button><button class="fmt strike"><s>S</s></button>
          <button class="fmt" aria-label="Validate text"><svg class="tick"><use href="#ticked"/></svg></button>
          <span class="combo text"><select aria-label="Sample text"><option>한국어 English 日本語 中文(繁體) 中文(简体) Tiếng Việt Español Italiano Bahasa Indonesia ไทย Português हिन्दी русский العربية‎ Deu</option></select></span>
        </div>
        <div class="pbody">
          <div class="features">
            <div class="flist">
              <label><input type="checkbox" checked>_shaper</label>
              <label><input type="checkbox">aalt</label>
              <label><input type="checkbox">ccmp</label>
              <label><input type="checkbox">dlig</label>
              <label><input type="checkbox">fina</label>
              <label><input type="checkbox">init</label>
              <label><input type="checkbox">kern</label>
              <label><input type="checkbox">locl</label>
            </div>
            <div class="hscroll"><svg class="ah"><use href="#left"/></svg><i></i><svg class="ah"><use href="#right"/></svg></div>
          </div>
          <i class="vgrip"></i>
          <div class="canvascol">
            <div class="canvasrow">
              <div class="canvas">
                <p class="tofu" data-words="3 7 3 6 6 5 4 7 8 6"></p>
                <p class="tofu" data-words="9 3 9 5 7 العربية 7"></p>
              </div>
              <div class="vscroll plain"><svg class="av"><use href="#up"/></svg><svg class="av"><use href="#down"/></svg></div>
            </div>
            <input class="path" aria-label="Glyph names" id="path">
          </div>
        </div>
      </section>
    </div>

    <div class="rightcol">
      <section class="props">
        <div class="phead"><h2>Glyph Properties (#0 .notdef)</h2><i class="dots"></i><button aria-label="Pin"><svg class="pin"><use href="#pin"/></svg></button><button aria-label="Close panel"><svg class="x"><use href="#close"/></svg></button></div>
        <form class="pform">
          <div class="frow"><label for="nm">Name</label><input id="nm" value=".notdef"><button type="button" class="ib wandb" aria-label="Generate name"><svg><use href="#wand"/></svg></button></div>
          <div class="frow"><label for="cp">Code-points</label><input id="cp"><button type="button" class="ib" aria-label="Select code-point"><svg><use href="#unicode"/></svg></button><button type="button" class="ib wandb" aria-label="Generate code-points"><svg><use href="#wand"/></svg></button></div>
          <div class="frow"><span class="lab">.notdef -</span></div>
          <div class="frow"><label for="ot">OT Class</label><span class="combo w135"><select id="ot"><option></option></select></span><span class="un">Unassigned</span></div>
          <div class="frow"><label for="lsb">LSB</label><span class="num">94</span><input id="lsb" placeholder="Multiple"></div>
          <div class="frow"><label for="rsb">RSB</label><span class="num">95</span><input id="rsb" placeholder="Multiple"></div>
          <div class="frow"><label for="aw">AW</label><span class="num">600</span><input id="aw" placeholder="Multiple"></div>
          <div class="frow"><label for="tg">Tag</label><span class="combo grow"><select id="tg"><option>No Glyph Tag</option></select></span><span class="combo grow second"><select aria-label="Layer tag"><option>No Layer Tag</option></select></span></div>
          <div class="frow tall"><label for="nt">Note</label><div class="note"><textarea id="nt"></textarea><div class="vscroll plain pale"><svg class="av"><use href="#up"/></svg><svg class="av"><use href="#down"/></svg></div><div class="hscroll pale"><svg class="ah"><use href="#left"/></svg><svg class="ah"><use href="#right"/></svg></div></div></div>
        </form>
      </section>

      <section class="transform">
        <div class="phead"><h2>Transform</h2><i class="dots"></i><button aria-label="Pin"><svg class="pin"><use href="#pin"/></svg></button><button aria-label="Close panel"><svg class="x"><use href="#close"/></svg></button></div>
        <form class="tform">
          <label for="tx">X</label><input id="tx">
          <div class="radios"><input type="radio" name="o" aria-label="Top left"><input type="radio" name="o" aria-label="Top"><input type="radio" name="o" aria-label="Top right"><input type="radio" name="o" aria-label="Left"><input type="radio" name="o" aria-label="Centre" checked><input type="radio" name="o" aria-label="Right"><input type="radio" name="o" aria-label="Bottom left"><input type="radio" name="o" aria-label="Bottom"><input type="radio" name="o" aria-label="Bottom right"></div>
          <label class="c1" for="ty">Y</label><input id="ty">
          <label class="c1" for="tw">W</label><input id="tw"><label for="th">H</label><input id="th">
          <label class="c1" for="tsx"><svg viewBox="0 0 24 24"><path d="M1.500 22V10h21v12" fill="#f9f9f9" stroke="#b0b0b0" stroke-width="1.500"/><path d="M2 4h7M15 4h7M5 1L2 4l3 3M19 1l3 3-3 3" fill="none" stroke="#b4b4b4" stroke-width="2"/></svg></label><input id="tsx" aria-label="Scale X"><label for="tsy"><svg viewBox="0 0 24 24"><path d="M2 2h12v20H2" fill="#f9f9f9" stroke="#b0b0b0" stroke-width="1.500"/><path d="M19 2v7M19 15v7M16 5l3-3 3 3M16 19l3 3 3-3" fill="none" stroke="#b4b4b4" stroke-width="2"/></svg></label><input id="tsy" aria-label="Scale Y">
          <label class="c1" for="tr"><svg viewBox="0 0 24 24"><path d="M16 5H11a8 8 0 1 0 8 9M13 1l4 4-4 4" fill="none" stroke="#b4b4b4" stroke-width="3"/><circle cx="12" cy="13" r="2" fill="#b4b4b4"/></svg></label><input id="tr" aria-label="Rotate angle"><label for="ts"><svg viewBox="0 0 24 24"><path d="M1 7h10v15H1z" fill="#fff" stroke="#b0b0b0" stroke-width="1.500"/><path d="M9 7h14l-7 15H3z" fill="#dcdcdc" stroke="#b0b0b0" stroke-width="1.500"/><path d="M7 4h9M13 0l4 4-4 4" fill="none" stroke="#b4b4b4" stroke-width="3"/></svg></label><input id="ts" aria-label="Skew">
          <label class="lockrow"><input type="checkbox" checked disabled>Lock aspect ratio</label>
        </form>
      </section>
    </div>
  </main>

  <footer class="status"><span class="s-left">1677 items selected</span><span class="s-right">1677 glyphs</span><svg class="size" viewBox="0 0 14 14"><path d="M10 0h3v3h-3zM5 5h3v3H5zM10 5h3v3h-3zM0 10h3v3H0zM5 10h3v3H5zM10 10h3v3h-3z" fill="#9db0cc"/></svg></footer>
</div>
<script src="app.js"></script>
</body>
</html>
```
FILE: styles.css
```css
*, ::before, ::after { box-sizing: border-box; }
body { margin: 0; background: #2b2b2b; color: #111; font: 17px/24px "Noto Sans", "Open Sans", "Noto Sans CJK KR", sans-serif; }
button, input, select, textarea { font: inherit; color: inherit; margin: 0; }
button { border: 0; padding: 0; background: none; }
h1, h2, p, ul { margin: 0; padding: 0; font-weight: 400; font-size: inherit; }
svg { display: block; flex: none; overflow: visible; }
svg text { font-family: "Noto Sans", "Open Sans", sans-serif; }
svg text.serif { font-family: "Liberation Serif", serif; }
.defs { position: absolute; width: 0; height: 0; }

.window { display: flex; flex-direction: column; height: 100vh; background: #edf4fd; border: 1px solid #3049a5; border-top: 0; border-radius: 8px; overflow: hidden; }
.titlebar { display: flex; align-items: center; flex: none; height: 48px; padding-left: 7px; background: #3049a5; color: #e4e9f8; }
.titlebar h1 { white-space: nowrap; padding-top: 2px; }
.logo { width: 22px; height: 24px; margin-right: 6px; }
.mosaic { width: 58px; height: 16px; margin: 0 6px 0 8px; }
.winbtns { display: flex; margin-left: auto; }
.winbtns button { width: 70px; height: 48px; display: grid; place-items: center; }
.winbtns svg { width: 16px; height: 16px; }

.menu { display: flex; align-items: center; flex: none; height: 38px; padding: 6px 0 0 11px; }
.menu button { padding: 0 12px; }
.grip { flex: none; width: 2px; height: 16px; margin-right: 3px; background: repeating-linear-gradient(#9fb1cc 0 2px, transparent 2px 4px); }
.bar { display: flex; align-items: center; flex: none; height: 45px; padding-left: 11px; }
.tb { flex: none; width: 42px; height: 42px; display: grid; place-items: center; }
.tb svg { width: 32px; height: 32px; }
.off { color: #b2b5b9; }
.sep { flex: none; width: 9px; height: 37px; border-left: 4px solid transparent; background: linear-gradient(90deg, #aebfd6 1px, transparent 1px); background-clip: padding-box; }
.dd { flex: none; width: 18px; height: 42px; margin-left: -6px; padding-left: 3px; }
.dd::before { content: ""; display: block; width: 8px; border: 4px solid transparent; border-top: 5px solid #000; border-bottom: 0; }
.dd.wide { width: 20px; margin-left: 0; padding-left: 6px; }
.dd.wide::before { border-top-color: #b9c6de; }
.dd.grey::before { border-top-color: #a8abb0; }
.grip.mid { margin-left: 8px; }
.grip.far1 { margin-left: 145px; }
.grip.g3a { margin-left: 37px; }
.grip.g3b { margin-left: 179px; }

.combo { position: relative; display: flex; flex: none; height: 33px; background: #fff; border: 1px solid #c9dbee; border-radius: 2px; }
.combo select { appearance: none; flex: 1; min-width: 0; border: 0; background: none; padding: 0 24px 0 4px; outline: 0; }
.combo::after { content: ""; position: absolute; right: 9px; top: 9px; width: 9px; height: 9px; border: solid #8296bd; border-width: 0 1px 1px 0; transform: rotate(45deg); pointer-events: none; }
.combo.zoom { width: 108px; }
.combo.w156 { width: 156px; }
.combo.w135 { width: 135px; }
.combo.grow { flex: 1; }

.tabs { display: flex; align-items: flex-end; flex: none; height: 46px; padding-left: 7px; border-bottom: 1px solid #7189ad; }
.tab { position: relative; display: flex; align-items: center; width: 312px; height: 39px; padding-left: 30px; color: #555; }
.tab.on { margin-left: -12px; color: #111; }
.tabshape { position: absolute; left: 0; top: 0; width: 312px; height: 40px; }
.tabtext { position: relative; white-space: nowrap; text-align: left; width: 241px; padding-top: 2px; }
.tab.on .tabtext { width: 228px; }
.tabtext.fade { -webkit-mask: linear-gradient(90deg, #000 80%, transparent); mask: linear-gradient(90deg, #000 80%, transparent); }
.tabx { position: relative; width: 14px; height: 14px; margin-left: 6px; color: #666; }

.work { display: flex; flex: 1; min-height: 0; padding: 5px 5px 6px 11px; margin-right: 6px; background: #eeeef0; }
.leftcol { flex: 1; min-width: 0; display: flex; flex-direction: column; }
.rightcol { flex: none; width: 476px; margin-left: 1px; border-left: 3px solid #dcdde6; padding-left: 3px; display: flex; flex-direction: column; }
.overview { flex: 1; min-height: 0; display: flex; flex-direction: column; }
.phead { display: flex; align-items: center; flex: none; height: 32px; padding: 0 7px 0 8px; color: #444; background: #eeeef0; }
.phead h2 { padding-top: 4px; white-space: nowrap; }
.phead.active { background: #007acc; color: #fff; --dot: #7dbcea; }
.phead button { color: #000; margin-left: 8px; }
.phead.active button { color: #fff; margin-left: 10px; }
.dots { --dot-fill: var(--dot, #a4a4a8); flex: 1; height: 10px; margin: 0 0 2px 12px; background: conic-gradient(from 270deg at 1px 1px, var(--dot-fill) 90deg, transparent 0) 0 0 / 4px 4px, conic-gradient(from 270deg at 1px 1px, var(--dot-fill) 90deg, transparent 0) 2px 2px / 4px 4px; }
.x { width: 16px; height: 16px; }
.pin { width: 16px; height: 18px; }

.ovbody { flex: 1; min-height: 0; display: flex; background: #fff; }
.tree { flex: none; width: 477px; list-style: none; }
.tree li { position: relative; display: flex; align-items: center; height: 26px; padding: 0 5px 0 11px; }
.tree li.sub { padding-left: 61px; }
.tree li.sel { background: #bcddfa; }
.tree span { padding: 3px 0 0 8px; white-space: nowrap; }
.tree b { margin-left: auto; padding-top: 3px; font-weight: 400; }
.exp { position: relative; z-index: 1; width: 17px; height: 17px; margin-right: 7px; }
.fold { width: 20px; height: 18px; }
.uni { width: 22px; height: 22px; }
.tree .uni + span { padding-left: 7px; }
.aicon { width: 20px; text-align: center; font-style: normal; font-weight: 600; color: #555; }
.tree li::before, .tree li::after { content: ""; position: absolute; border: 0 dotted #9a9a9a; }
.tree li::before { left: 19px; top: 0; height: 26px; border-left-width: 1px; }
.tree li.sel::before { top: 13px; height: 13px; }
.tree li.end::before { height: 13px; }
.tree li::after { left: 28px; top: 12px; width: 7px; border-top-width: 1px; }
.tree li.sub::before { left: 46px; }
.tree li.sub::after { left: 46px; width: 13px; }
.tree li.last::before { height: 13px; }
.tree li.thru { background: repeating-linear-gradient(#9a9a9a 0 1px, transparent 1px 3px) 19px 0 / 1px 26px no-repeat; }

.glyphpane { flex: 1; min-width: 0; display: flex; flex-direction: column; background: #fff; }
.gtitle { flex: none; height: 27px; padding: 3px 0 0 8px; background: #f0f6fa; border-bottom: 1px solid #d5e2ef; }
.gwrap { position: relative; flex: 1; min-height: 0; padding: 0 16px 0 4px; background: linear-gradient(90deg, #edf4fd 4px, transparent 4px); }
.ggrid { display: grid; grid-template-columns: repeat(11, minmax(0, 1fr)); grid-auto-rows: 164px; height: 100%; overflow: hidden; border-left: 1px solid #9a9a9e; }
.cell { border-right: 1px solid #9a9a9e; background: #4056a4; display: flex; flex-direction: column; }
.cell code { flex: none; height: 24px; border: 1px solid #9a9a9e; border-width: 1px 0; background: linear-gradient(#48a2ee, #338fdc); font: 15px/22px "Noto Sans", "Open Sans", sans-serif; text-align: center; color: #0a1020; }
.cell.zero .field { background: linear-gradient(90deg, transparent 49%, #40569f 49% 50%, transparent 50%), #4860aa; }
.field { flex: 1; position: relative; background: #4056a4; }
.band { display: flex; justify-content: center; height: 100%; padding-top: 4px; background: #4c63b0; color: #fff; font: 91px/134px "Noto Sans Arabic", "DejaVu Sans", sans-serif; white-space: pre; }
.field::after { content: ""; position: absolute; left: 0; right: 0; top: 97px; height: 1px; background: #3a4f9a; }
.band span { position: relative; z-index: 1; }
.box { width: 38px; height: 66px; margin-top: 28px; border: 5px solid #fff; }
.mark { position: absolute; z-index: 2; left: -1px; top: -2px; width: 139px; height: 173px; border: 5px solid #ee1c24; }

.vscroll { flex: none; width: 25px; display: flex; flex-direction: column; align-items: center; padding: 8px 0 9px; background: #edf4fd; color: #98a9c5; }
.vscroll i { width: 3px; height: 27px; margin: 9px 0 auto; background: #98a9c5; border-radius: 2px; }
.vscroll.plain { justify-content: space-between; }
.av { width: 12px; height: 10px; }
.ah { width: 10px; height: 12px; }
.hscroll { display: flex; align-items: center; height: 27px; padding: 0 9px; background: #edf4fd; color: #98a9c5; }
.hscroll i { width: 68px; height: 3px; margin: 0 auto 0 11px; background: #98a9c5; border-radius: 2px; }
.vscroll.pale, .hscroll.pale { color: #bccadf; }

.preview { flex: none; border-top: 6px solid #cccedb; }
.ptools { display: flex; align-items: center; height: 44px; padding: 0 6px; background: #f5f5f5; }
.ptools .combo { margin-right: 9px; }
.spin { display: flex; align-items: center; flex: none; height: 33px; background: #fff; border: 1px solid #c9dbee; border-radius: 2px; padding-right: 8px; }
.spin input { flex: 1; min-width: 0; width: 0; border: 0; background: none; text-align: right; padding: 0 7px 0 0; outline: 0; }
.spin svg { width: 14px; height: 22px; }
.s1 { width: 74px; margin: 0 13px 0 -3px; }
.s2 { width: 86px; margin-right: 21px; }
.fmt { flex: none; font-weight: 600; color: #555; width: 14px; margin-right: 25px; }
.fmt.strike { margin-right: 34px; }
.tick { width: 24px; height: 24px; }
.ptools .combo.text { flex: 1; min-width: 0; margin: 0 0 0 9px; }
.pbody { display: flex; height: 244px; }
.features { flex: none; width: 200px; display: flex; flex-direction: column; background: #fff; border: 1px solid #c9dbee; }
.flist { flex: 1; padding-top: 3px; }
.flist label { display: flex; align-items: center; height: 25px; padding-left: 9px; gap: 9px; }
input[type=checkbox] { appearance: none; flex: none; width: 20px; height: 20px; margin: 0 0 4px; border: 2px solid #adbbd8; border-radius: 3px; background: #fff; display: grid; place-items: center; }
input[type=checkbox]:checked { background: #4f74f0; border-color: #4f74f0; }
input[type=checkbox]:checked::before { content: ""; width: 7px; height: 12px; border: solid #fff; border-width: 0 2px 2px 0; transform: translateY(-2px) rotate(45deg); }
.vgrip { flex: none; width: 7px; background: linear-gradient(#d0dcec, #d0dcec) 3px 98px / 2px 42px no-repeat #f2f4f8; }
.canvascol { flex: 1; min-width: 0; display: flex; flex-direction: column; }
.canvasrow { flex: 1; display: flex; min-height: 0; }
.canvas { flex: 1; min-width: 0; background: #fff; padding: 5px 0 0 8px; }
.tofu { display: flex; align-items: center; height: 97px; padding-left: 4px; }
.tofu i { flex: none; width: 19px; height: 34px; margin-right: 9px; border: 2px solid #111; }
.tofu .gap { width: 9px; margin: 0; border: 0; }
.tofu span { font: 46px/60px "Noto Sans Arabic", "DejaVu Sans", sans-serif; width: 116px; text-align: center; margin-right: 7px; }
.path, .pform input, .tform input:not([type]) { height: 33px; background: #fff; border: 1px solid #c9dbee; border-radius: 2px; padding: 0 3px; outline: 0; }
.path { width: 100%; padding: 0 2px; }

.props { flex: 1; min-height: 0; background: #edf4fd; }
.pform { padding: 12px 6px 11px 13px; background: #f5f5f5; }
.rightcol .phead button { margin-left: 10px; }
.frow { display: flex; align-items: center; height: 33px; margin-bottom: 9px; }
.frow label { flex: none; width: 113px; }
.frow label:has(+ .num) { width: 52px; }
.num { flex: none; width: 61px; }
.frow input { flex: 1; min-width: 0; }
.frow input::placeholder { color: #666; }
.ib { width: 24px; height: 24px; margin-left: 12px; }
.ib svg { width: 24px; height: 24px; }
.wandb { margin: 0 4px 0 12px; }
.ib + .wandb { margin-left: 16px; }
.un { margin: 0 16px 0 auto; }
.second { margin-left: 6px; }
.frow.tall { height: 197px; margin: 0; align-items: flex-start; }
.frow.tall label { padding-top: 5px; }
.note { flex: 1; height: 197px; display: grid; grid-template: 1fr 27px / 1fr 27px; background: #edf4fd; border: 1px solid #c9dbee; }
.note textarea { border: 0; resize: none; background: #fff; outline: 0; }
.note .vscroll { width: auto; padding: 8px 0; }
.note .hscroll { justify-content: space-between; }

.transform { flex: none; height: 456px; border-top: 6px solid #cccedb; background: #f5f5f5; }
.tform { display: grid; grid-template-columns: 46px 104px 61px 104px; grid-auto-rows: 33px; row-gap: 9px; padding: 12px 0 0 11px; align-items: center; }
.tform label:not(.lockrow) { display: flex; justify-content: flex-end; padding-right: 18px; }
.tform .c1 { grid-column: 1; }
.tform svg { width: 24px; height: 24px; margin-right: -4px; }
.tform input:not([type]) { min-width: 0; }
.radios { grid-row: 1 / 3; grid-column: 4; display: grid; grid-template-columns: repeat(3, 20px); gap: 4px 6px; padding-left: 1px; align-self: start; padding-top: 2px; }
.radios input { appearance: none; width: 20px; height: 20px; border: 2px solid #cfd6e4; border-radius: 50%; background: #fafafa; }
.radios input:checked { border: 5px solid #bcc6da; }
.lockrow { grid-column: 1 / 5; align-self: start; display: flex; align-items: center; gap: 5px; padding-left: 48px; color: #8a8a8a; }
.lockrow input[type=checkbox] { background: #bcc6da; border-color: #bcc6da; }

.status { flex: none; display: flex; align-items: center; height: 43px; padding: 0 11px 0 810px; }
.s-left { border-left: 1px solid #b5c3da; padding: 3px 0 3px 11px; }
.s-right { margin-left: auto; border-left: 1px solid #b5c3da; padding: 3px 0 3px 79px; }
.size { width: 14px; height: 14px; margin: 12px 0 0 14px; }
```
FILE: app.js
```js
// Each cell: code label, text shown, left edge and width of the advance band.
const J = "\u200d";
const HAMZA = "\u200f\u00a0\u0654";
const c = n => String.fromCodePoint(parseInt(n, 16));
const e = (code, x, w, text) => ({ code, x, w, text: text ?? (code ? c(code) : "") });
const cells = [
  { code: "", x: 35, w: 55, box: true }, { code: "00", x: 0, w: 0, zero: true }, e("0D", 51, 24, ""), e("20", 51, 24, ""),
  e("0621", 45, 38), e("0674", 54, 18, HAMZA), e("FE80", 45, 38), e("0627", 52, 22), e("FE8D", 52, 22), e("FE8E", 44, 27), e("0623", 53, 22),
  e("FE83", 53, 22), e("FE84", 47, 26, J + c("0623")), e("0625", 49, 22), e("FE87", 49, 22), e("FE88", 49, 22), e("0672", 56, 21), e("", 51, 26, J + c("0672")), e("0673", 55, 22), e("", 50, 27, J + c("0673")), e("0622", 53, 22), e("FE81", 53, 22),
  e("FE82", 50, 27), e("0671", 53, 22), e("FB50", 54, 22), e("FB51", 54, 22, c("0671")), e("FD3D", 40, 22), e("FD3C", 38, 37), e("0675", 41, 37, HAMZA + c("0627")), e("", 39, 37, HAMZA + c("FE8E")), e("066E", 18, 91), e("", 9, 101, J + c("066E")), e("", 45, 32, c("FBE9")),
  e("", 53, 25, c("FBE8")), e("0628", 18, 92), e("FE8F", 18, 92), e("FE90", 9, 101), e("FE92", 44, 32), e("FE91", 53, 25), e("067E", 18, 92), e("FB56", 18, 92), e("FB57", 9, 101), e("FB59", 43, 35), e("FB58", 52, 28),
  e("067B", 18, 92), e("FB52", 18, 92), e("FB53", 9, 101), e("FB55", 45, 31), e("FB54", 53, 25), e("0680", 18, 92), e("FB5A", 18, 92), e("FB5B", 9, 101), e("FB5D", 44, 33), e("FB5C", 52, 28), e("FBE9", 45, 31),
  e("FBE8", 53, 25, ""), e("062A", 18, 92, ""), e("FE95", 18, 92, ""), e("FE96", 9, 101, ""), e("FE98", 44, 34, ""), e("FE97", 51, 27, ""), e("067C", 18, 92, ""), e("", 9, 101, ""), e("", 45, 32, ""), e("", 51, 27, ""), e("067D", 18, 92, "")
];
document.getElementById("ggrid").innerHTML = cells.map(g =>
  `<div class="cell${g.zero ? " zero" : ""}"><code>${g.code ? "$" + g.code : ""}</code><div class="field"><div class="band" style="margin-left:${g.x}px;width:${g.w}px">${g.box ? '<span class="box"></span>' : g.text ? `<span>${g.text}</span>` : ""}</div></div></div>`).join("");

// Sample line: a number is a run of missing glyphs, anything else is set as text.
document.querySelectorAll(".tofu").forEach(p => {
  p.innerHTML = p.dataset.words.split(" ").map(w =>
    Number(w) ? "<i></i>".repeat(w) : `<span>${w}</span>`).join('<i class="gap"></i>');
});

document.getElementById("path").value = [3, 7, 3, 6, 6, 5]
  .map(n => "/.notdef".repeat(n)).join("/space");
```
